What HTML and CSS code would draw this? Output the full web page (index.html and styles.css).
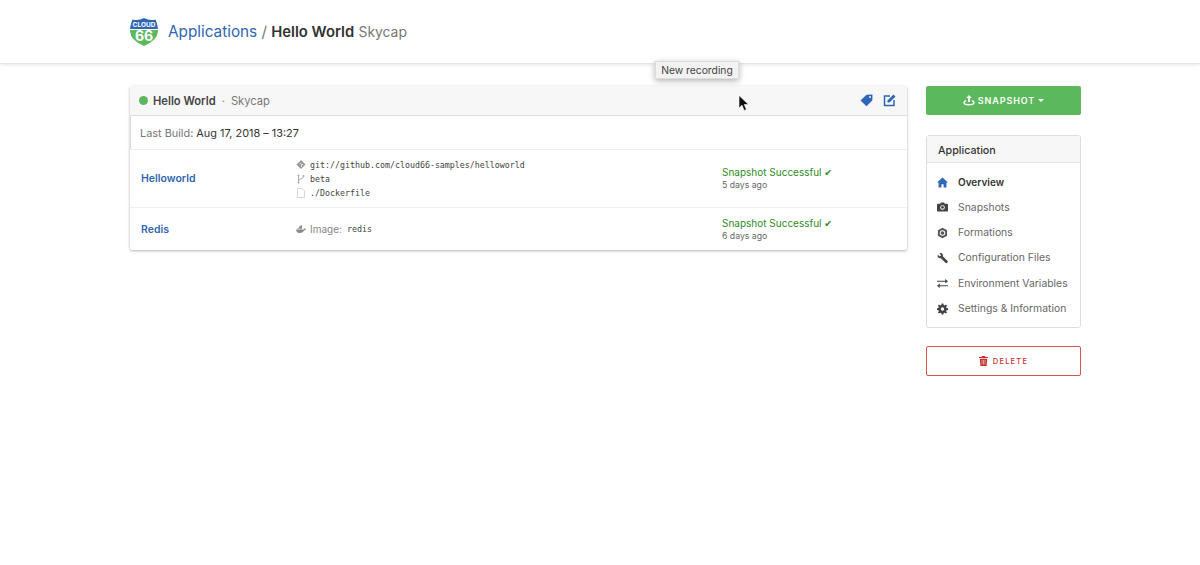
FILE: index.html
```html
<!DOCTYPE html>
<html lang="en">
<head>
  <meta charset="UTF-8">
  <meta name="viewport" content="width=device-width, initial-scale=1.0">
  <title>Hello World Skycap</title>
  <link rel="stylesheet" href="styles.css">
</head>
<body>
  <header class="topbar">
    <svg class="logo" width="28" height="28" viewBox="0 0 28 28">
      <path d="M2.500 1.500 Q8 3 14 0 Q20 3 25.500 1.500 Q27.500 6 28 11 L0 11 Q.5 6 2.500 1.500Z" fill="#2f66b5"/>
      <path d="M0 12 H28 Q28.500 22 14 28 Q-.5 22 0 12Z" fill="#5cb85c"/>
      <text x="14" y="8.600" class="logo-cloud" text-anchor="middle">CLOUD</text>
      <text x="14" y="23" class="logo-num" text-anchor="middle">66</text>
    </svg>
    <h1 class="page-title"><a href="#">Applications</a> <span class="slash">/</span> <strong>Hello World</strong> <span class="muted">Skycap</span></h1>
  </header>

  <div class="tooltip">New recording</div>
  <svg class="cursor" width="12" height="17" viewBox="0 0 12 17">
    <path d="M1 .5V13l3-2.800L6.200 15.500l2.200-1L6.300 9.500H10.500Z" fill="#111" stroke="#fff" stroke-width=".6"/>
  </svg>

  <main class="content">
    <section class="card">
      <div class="card-head">
        <span class="dot"></span>
        <strong>Hello World</strong>
        <span class="sep">·</span>
        <span class="muted">Skycap</span>
        <span class="head-icons">
          <svg width="13" height="13" viewBox="0 0 13 13"><path d="M.5 6.500 6.500 .8 12.500 .5 12.300 6.500 6.500 12.300Z" fill="#2f66b5"/><circle cx="10" cy="3" r="1" fill="#f7f7f7"/></svg>
          <svg width="13" height="13" viewBox="0 0 13 13"><path d="M7 2H1.500V11.500H11V6" fill="none" stroke="#2f66b5" stroke-width="1.500"/><path d="M4.500 6.500 10.500 .5 12.500 2.500 6.500 8.500H4.500Z" fill="#2f66b5"/></svg>
        </span>
      </div>
      <div class="build-row"><span class="muted">Last Build:</span> Aug 17, 2018 – 13:27</div>
      <div class="svc-row svc-first">
        <a class="svc-name" href="#">Helloworld</a>
        <div class="svc-info">
          <div class="info-line">
            <svg class="info-icon" width="9" height="9" viewBox="0 0 9 9"><path d="M4.500 0 9 4.500 4.500 9 0 4.500Z" fill="#999"/><path d="M3 2.500 5 4.500V7M5 4.500 6.500 4.500" stroke="#fff" stroke-width=".7" fill="none"/></svg>
            <code>git://github.com/cloud66-samples/helloworld</code>
          </div>
          <div class="info-line">
            <svg class="info-icon" width="9" height="10" viewBox="0 0 9 10"><path d="M2 1.500V9M2 7Q2 5 5 4.500 7 4.200 7 2" fill="none" stroke="#aaa"/><circle cx="2" cy="1.500" r="1" fill="#aaa"/><circle cx="7" cy="2" r="1" fill="#aaa"/><circle cx="2" cy="8.500" r="1" fill="#aaa"/></svg>
            <code>beta</code>
          </div>
          <div class="info-line">
            <svg class="info-icon" width="9" height="10" viewBox="0 0 9 10"><path d="M1 .5H5.500L8 3V9.500H1Z" fill="none" stroke="#ccc" stroke-width=".8"/></svg>
            <code>./Dockerfile</code>
          </div>
        </div>
        <div class="svc-status">
          <div class="ok">Snapshot Successful <span class="check">✔</span></div>
          <div class="ago">5 days ago</div>
        </div>
      </div>
      <div class="svc-row svc-last">
        <a class="svc-name" href="#">Redis</a>
        <div class="svc-info">
          <div class="info-line">
            <svg class="info-icon" width="10" height="9" viewBox="0 0 10 9"><path d="M0 4.500H7.500Q8 3.500 9 3.500L10 4Q9.500 5.500 8 5.500 7 8 3.500 8 .5 8 0 4.500Z" fill="#888"/><path d="M1.500 3H3V1.500H4.500V.2H6V3.800H1.500Z" fill="#888"/></svg>
            <span class="muted-light">Image:</span> <code>redis</code>
          </div>
        </div>
        <div class="svc-status">
          <div class="ok">Snapshot Successful <span class="check">✔</span></div>
          <div class="ago">6 days ago</div>
        </div>
      </div>
    </section>

    <aside class="sidebar">
      <button class="btn-snapshot" type="button">
        <svg width="12" height="11" viewBox="0 0 12 11"><path d="M6 0 8.800 3H7V7H5V3H3.200Z" fill="#fff"/><path d="M2.800 5 Q.3 5.800 .3 7.500 .3 10.500 6 10.500T11.700 7.500Q11.700 5.800 9.200 5L8.500 6.200Q10.200 6.800 10.200 7.500 10.200 9 6 9T1.800 7.500Q1.800 6.800 3.500 6.200Z" fill="#fff"/></svg>
        SNAPSHOT
        <span class="caret"></span>
      </button>

      <nav class="side-panel">
        <div class="side-title">Application</div>
        <ul class="side-list">
          <li class="active">
            <svg width="12" height="11" viewBox="0 0 12 11"><path d="M6 0 12 5.500H10.300V11H7.200V7.500H4.800V11H1.700V5.500H0Z" fill="#2f66b5"/></svg>
            Overview
          </li>
          <li>
            <svg width="12" height="10" viewBox="0 0 12 10"><path d="M1 1.500H3.500L4.300 0H7.700L8.500 1.500H11Q12 1.500 12 2.500V9Q12 10 11 10H1Q0 10 0 9V2.500Q0 1.500 1 1.500Z" fill="#444"/><circle cx="6" cy="5.500" r="2.500" fill="#fff"/><circle cx="6" cy="5.500" r="1.500" fill="#444"/></svg>
            Snapshots
          </li>
          <li>
            <svg width="12" height="12" viewBox="0 0 12 12"><path d="M6 .3 11 3.100V8.900L6 11.700 1 8.900V3.100Z" fill="#555"/><circle cx="6" cy="6" r="3" fill="#fff"/><circle cx="6" cy="6" r="2" fill="#555"/></svg>
            Formations
          </li>
          <li>
            <svg width="12" height="12" viewBox="0 0 12 12"><path d="M1 2.500 3 4.300 4.500 3 2.600 1Q4.500 0 5.800 1.300 6.800 2.500 6.300 4L11.500 9.300Q12 10 11.300 10.800L10.700 11.400Q10 12 9.300 11.300L4.200 6.200Q2.500 6.600 1.300 5.500 0 4.300 1 2.500Z" fill="#444"/></svg>
            Configuration Files
          </li>
          <li>
            <svg width="12" height="11" viewBox="0 0 12 11"><path d="M0 2.400H9V.6L12 3 9 5.400V3.600H0ZM12 7.400V8.600H3V10.400L0 8 3 5.600V7.400Z" fill="#444"/></svg>
            Environment Variables
          </li>
          <li>
            <svg width="12" height="12" viewBox="0 0 12 12"><path d="M5 0H7L7.300 1.700 8.400 2.200 9.800 1.200 11 2.500 10 3.800 10.400 5 12 5.200V7L10.400 7.300 10 8.400 11 9.800 9.800 11 8.400 10 7.300 10.400 7 12H5L4.700 10.400 3.600 10 2.200 11 1 9.800 2 8.400 1.600 7.300 0 7V5.200L1.600 5 2 3.800 1 2.500 2.200 1.200 3.600 2.200 4.700 1.700Z" fill="#444"/><circle cx="6" cy="6" r="1.800" fill="#fff"/></svg>
            Settings &amp; Information
          </li>
        </ul>
      </nav>

      <button class="btn-delete" type="button">
        <svg width="9" height="10" viewBox="0 0 9 10"><path d="M3 0H6L6.500 1H9V2H0V1H2.500ZM.8 2.800H8.200L7.600 10H1.400Z" fill="#c9302c"/><path d="M3 4V8.500M4.500 4V8.500M6 4V8.500" stroke="#fff" stroke-width=".5"/></svg>
        DELETE
      </button>
    </aside>
  </main>
</body>
</html>
```

FILE: styles.css
```css
* {
  box-sizing: border-box;
}
body {
  margin: 0;
  font-family: Inter, "Open Sans", sans-serif;
  font-size: 10.900px;
  color: #333;
  background: #fff;
  position: relative;
  height: 565px;
  overflow: hidden;
}
a {
  color: #2f66b0;
  text-decoration: none;
}
code {
  font-family: "DejaVu Sans Mono", monospace;
  font-size: 8.300px;
  color: #444;
}
.muted {
  color: #777;
}
.muted-light {
  color: #888;
  font-size: 10px;
  margin-right: 2px;
}
.topbar {
  height: 64px;
  padding: 18px 130px 0;
  display: flex;
  gap: 10px;
  border-bottom: 1px solid #e6e6e6;
  box-shadow: 0 1px 3px rgba(0, 0, 0, 0.1);
}
.logo-cloud {
  font: 700 6.500px Inter, sans-serif;
  fill: #fff;
}
.logo-num {
  font: 700 14px Inter, sans-serif;
  fill: #fff;
}
.page-title {
  margin: 4px 0 0;
  font-size: 15.300px;
  font-weight: 400;
  line-height: 20px;
}
.page-title strong {
  font-size: 14.800px;
  font-weight: 600;
  color: #333;
}
.page-title .muted {
  font-size: 13.900px;
}
.slash {
  color: #777;
}
.tooltip {
  position: absolute;
  left: 655px;
  top: 61px;
  width: 84px;
  height: 18px;
  background: #f2f2f2;
  border: 1px solid #ddd;
  box-shadow: 0 2px 6px rgba(0, 0, 0, 0.3);
  font-size: 10.300px;
  line-height: 16px;
  text-align: center;
  color: #444;
  z-index: 2;
}
.cursor {
  position: absolute;
  left: 738px;
  top: 95px;
  z-index: 2;
}
.content {
  display: flex;
  gap: 19px;
  padding: 22px 0 0 130px;
}
.card {
  width: 777px;
  height: 164px;
  box-shadow: 0 1px 3px rgba(0, 0, 0, 0.3);
  border-radius: 2px;
}
.card-head {
  height: 30px;
  background: #f7f7f7;
  padding: 0 11px 0 9px;
  display: flex;
  align-items: center;
  font-size: 11.200px;
  border-bottom: 1px solid #ddd;
}
.card-head strong {
  font-weight: 600;
  color: #444;
}
.dot {
  width: 9px;
  height: 9px;
  border-radius: 50%;
  background: #5cb85c;
  margin-right: 5px;
}
.sep {
  margin: 0 6px;
  color: #888;
}
.head-icons {
  margin-left: auto;
  display: flex;
  gap: 10px;
}
.build-row {
  height: 34px;
  line-height: 35px;
  padding-left: 9px;
  border-left: 1px solid #ddd;
  border-bottom: 1px solid #eee;
}
.svc-row {
  display: flex;
  align-items: center;
  padding-left: 11px;
}
.svc-first {
  height: 58px;
  border-bottom: 1px solid #f0f0f0;
}
.svc-last {
  height: 42px;
}
.svc-name {
  width: 155px;
  font-size: 10.500px;
  font-weight: 600;
}
.svc-info {
  width: 426px;
  font-size: 9.500px;
}
.info-line {
  height: 14px;
  display: flex;
  align-items: center;
  gap: 3px;
}
.info-icon {
  width: 10px;
  margin-right: 1px;
}
.svc-status {
  font-size: 10px;
}
.ok {
  color: #2e8b1e;
  line-height: 14px;
}
.check {
  font-family: "DejaVu Sans", sans-serif;
  font-size: 9.500px;
  line-height: 10px;
}
.ago {
  color: #666;
  font-size: 8.700px;
  line-height: 13px;
}
.sidebar {
  width: 155px;
}
.btn-snapshot {
  width: 100%;
  height: 29px;
  border: 0;
  border-radius: 2px;
  background: #5cb85c;
  color: #fff;
  font: 600 9px Inter, sans-serif;
  letter-spacing: 0.9px;
  display: flex;
  align-items: center;
  justify-content: center;
  gap: 3px;
}
.caret {
  border: 3.500px solid transparent;
  border-top-color: #fff;
  border-bottom: 0;
}
.side-panel {
  margin-top: 20px;
  border: 1px solid #ddd;
  border-radius: 3px;
  height: 193px;
}
.side-title {
  height: 27px;
  line-height: 29px;
  padding-left: 11px;
  background: #f7f7f7;
  border-bottom: 1px solid #e5e5e5;
  font-size: 10.700px;
  font-weight: 500;
  color: #333;
}
.side-list {
  list-style: none;
  margin: 6.400px 0 0;
  padding: 0;
}
.side-list li {
  height: 25.300px;
  display: flex;
  align-items: center;
  gap: 10px;
  padding-left: 10px;
  font-size: 10.400px;
  color: #666;
}
.side-list li svg {
  width: 11px;
}
.side-list li.active {
  color: #333;
  font-size: 10px;
  font-weight: 600;
}
.btn-delete {
  margin-top: 18px;
  width: 100%;
  height: 30px;
  background: #fff;
  border: 1px solid #d9534f;
  border-radius: 2px;
  color: #c9302c;
  font: 500 7.500px Inter, sans-serif;
  letter-spacing: 1.200px;
  display: flex;
  align-items: center;
  justify-content: center;
  gap: 5px;
}
```
